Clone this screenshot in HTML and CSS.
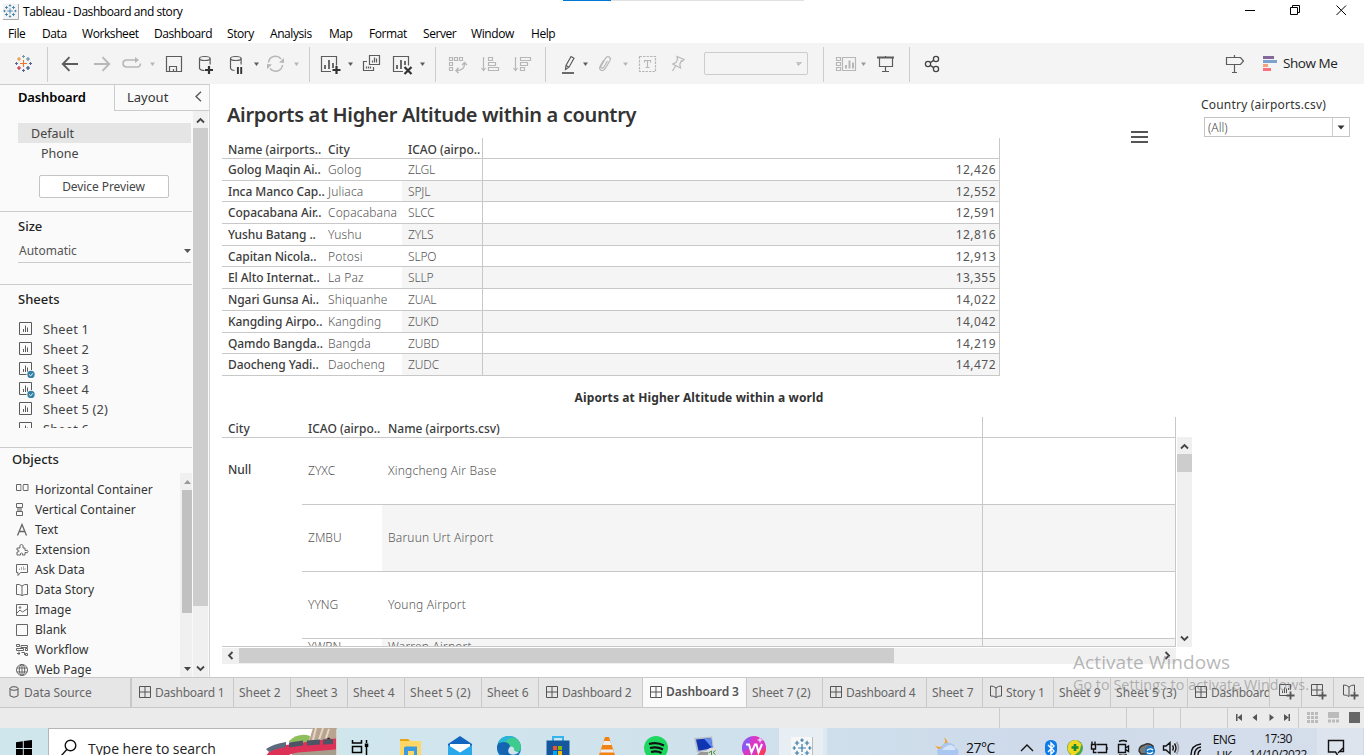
FILE: index.html
```html
<!DOCTYPE html>
<html lang="en">
<head>
<meta charset="utf-8">
<title>Tableau - Dashboard and story</title>
<link rel="stylesheet" href="styles.css">
</head>
<body>
<svg class="defs" width="0" height="0">
  <symbol id="mark" viewBox="0 0 18 18"><path d="M9 5.5v7M5.500 9h7" class="m1"/><path d="M4.500 2.500v4M2.500 4.500h4" class="m2"/><path d="M13.500 2.500v4M11.500 4.500h4" class="m3"/><path d="M4.500 11.500v4M2.500 13.500h4" class="m4"/><path d="M13.500 11.500v4M11.500 13.500h4" class="m5"/><path d="M9 .5v3M7.500 2h3" class="m6"/><path d="M9 14.500v3M7.500 16h3M.5 9h3M2 7.500v3M14.500 9h3M16 7.500v3" class="m7"/></symbol>
  <symbol id="sheet" viewBox="0 0 17 17"><path d="M1.500 1.500h12v12h-12zM5.500 11V8M7.500 11V4.500M9.500 11V6.500" fill="none" stroke="#5a5a5a"/></symbol>
  <symbol id="sheetused" viewBox="0 0 17 17"><path d="M1.500 1.500h12v12h-12zM5.500 11V8M7.500 11V4.500M9.500 11V6.500" fill="none" stroke="#5a5a5a"/><circle cx="13" cy="13.500" r="4.500" fill="#fafafa"/><circle cx="13" cy="13.500" r="3.700" fill="#357fa5"/><path d="M11.200 13.500l1.400 1.400 2.300-2.600" fill="none" stroke="#fff"/></symbol>
  <symbol id="grid" viewBox="0 0 12 12"><path d="M.5.5h11v11H.5zM6 .5v11M.5 6h11" fill="none" stroke="#555"/></symbol>
  <symbol id="book" viewBox="0 0 12 13"><path d="M6 3Q3.500.8.5 1v10q3-.3 5.500 1.500Q8.500 10.700 11.500 11V1Q8.500.8 6 3v9.500" fill="none" stroke="#555"/></symbol>
</svg>

<header class="titlebar">
  <svg class="app" width="17" height="17" viewBox="0 0 17 17"><path d="M1 .5h16v16H1" fill="#f3f3f3"/><path d="M16.500 1v15.500H1" fill="none" stroke="#aaa"/><use href="#mark" class="blue" x="1" y="1" width="14" height="14"/></svg>
  <span class="apptitle">Tableau - Dashboard and story</span>
  <svg class="controls" width="124" height="24" viewBox="1240 0 124 24" fill="none" stroke="#000"><path d="M1245 10.500h10M1290.500 7.500h7v7h-7zM1292.500 7.500v-2h7v7h-2"/><path d="M1336.500 5.500l9.500 9.500m0-9.500l-9.500 9.500"/></svg>
</header>
<nav class="menu"><span class="m-file">File</span><span class="m-data">Data</span><span class="m-ws">Worksheet</span><span class="m-db">Dashboard</span><span class="m-story">Story</span><span class="m-an">Analysis</span><span class="m-map">Map</span><span class="m-fmt">Format</span><span class="m-srv">Server</span><span class="m-win">Window</span><span>Help</span></nav>

<div class="toolbar">
  <svg width="47" height="41" viewBox="0 43 47 41"><use href="#mark" class="color" x="14.500" y="54.500" width="18" height="18"/></svg>
  <i class="sep"></i>
  <svg width="39" height="41" viewBox="48 43 39 41" class="dk"><path d="M78 64H63M69.500 57.200L62.800 64l6.700 6.800" stroke-width="1.900"/></svg>
  <svg width="30" height="41" viewBox="87 43 30 41" class="lt"><path d="M94 64h15M102.500 57.200l6.700 6.800-6.700 6.800" stroke-width="1.900"/></svg>
  <svg width="41" height="41" viewBox="117 43 41 41" class="lt"><path d="M136 60H126q-3 .5-3 3.500t3 3.500h12q2.500-.5 2.500-3.500" stroke-width="1.500"/><path d="M135 57l4 3-4 3z" class="fl"/><path d="M150 62.500h5l-2.500 3.500z" class="fl"/></svg>
  <svg width="32" height="41" viewBox="158 43 32 41" class="dk"><path d="M166.500 56.500h15v15h-15zM169.500 71.500v-5h7v5M173.500 71.500v-2.500"/></svg>
  <svg width="32" height="41" viewBox="190 43 32 41" class="dk"><ellipse cx="204.800" cy="58.500" rx="5.300" ry="2"/><path d="M199.500 58.500v10q1 2 5 2M210.100 58.500v6"/><path d="M209 66v8M205 70h8" stroke="#333" stroke-width="2.200"/></svg>
  <svg width="39" height="41" viewBox="222 43 39 41" class="dk"><ellipse cx="235.800" cy="58.500" rx="5.300" ry="2"/><path d="M230.500 58.500v10q1 2 4 2M241.100 58.500v6"/><path d="M237.900 67v7M241.200 67v7" stroke="#333" stroke-width="1.900"/><path d="M254 62.500h5l-2.500 3.500z" class="fd"/></svg>
  <svg width="48" height="41" viewBox="261 43 48 41" class="lt"><path d="M268.500 62.500a7 7 0 0 1 12.500-3.500M282.500 65a7 7 0 0 1-12.500 3.500" stroke-width="1.500"/><path d="M284 58v5l-5-.5zM267 69v-5l5 .5z" class="fl"/><path d="M294 62.500h5l-2.500 3.500z" class="fl"/></svg>
  <i class="sep"></i>
  <svg width="46" height="41" viewBox="310 43 46 41" class="dk"><path d="M331 71.500h-9.500v-15h15v9"/><path d="M325 69v-4M329 69v-9M333 68v-5" stroke-width="1.800"/><path d="M336.500 66v8M332.500 70h8" stroke="#333" stroke-width="2.200"/><path d="M348 62.500h5l-2.500 3.500z" class="fd"/></svg>
  <svg width="31" height="41" viewBox="356 43 31 41" class="dk"><path d="M369.500 55.500h10v9h-10zM372.500 62.500v-2M374.500 62.500v-5M376.500 62.500v-4M367 61.500h-3.500v9h10V67M366.500 68.500v-2M368.500 68.500v-2M370.500 68.500v-2"/></svg>
  <svg width="48" height="41" viewBox="387 43 48 41" class="dk"><path d="M403 71.500h-9.500v-15h15v9"/><path d="M397 69v-4M401 69v-9M405 65v-4" stroke-width="1.800"/><path d="M404.500 67l7 7m0-7l-7 7" stroke="#333" stroke-width="2.200"/><path d="M420 62.500h5l-2.500 3.500z" class="fd"/></svg>
  <i class="sep"></i>
  <svg width="43" height="41" viewBox="436 43 43 41" class="lt"><path d="M449.500 57.500h3v3h-3zM454.500 57.500h3v3h-3zM459.500 57.500h3v3h-3zM449.500 62.500h3v3h-3zM449.500 67.500h3v3h-3z"/><path d="M464.500 63v1q0 6.500-8 6.500M462 65l2.500-2.500 2.500 2.500M458.500 67.800l-2.500 2.700 2.500 2.700" stroke-width="1.400"/></svg>
  <svg width="23" height="41" viewBox="479 43 23 41" class="lt"><path d="M483.500 57v14M481.500 68l2 2.500 2-2.500M488.500 57.500h4v3h-4zM488.500 62.500h7v3h-7zM488.500 67.500h10v3h-10z" stroke-width="1.200"/></svg>
  <svg width="43" height="41" viewBox="502 43 43 41" class="lt"><path d="M515.500 57v14M513.500 68l2 2.500 2-2.500M520.500 57.500h10v3h-10zM520.500 62.500h7v3h-7zM520.500 67.500h4v3h-4z" stroke-width="1.200"/></svg>
  <i class="sep"></i>
  <svg width="44" height="41" viewBox="546 43 44 41" class="dk"><path d="M562 73h12" stroke-width="1.800"/><path d="M565.500 69.500l.5-4 5-9 3 1.700-5 9zM566 65.500l3 1.700"/><path d="M583 62.500h5l-2.500 3.500z" class="fd"/></svg>
  <svg width="40" height="41" viewBox="590 43 40 41" class="lt"><path d="M607.500 61l-3.700 6.200q-1 1.500-2.200.8-1.200-1-.4-2.400l4.600-7.700q1.400-2 3.300-1 2 1.300 1 3.300l-5 8.500q-1.700 2.600-4.200 1.500-2-1.500-.8-4l3.500-6"/><path d="M623 62.500h5l-2.500 3.500z" class="fl"/></svg>
  <svg width="35" height="41" viewBox="630 43 35 41" class="lt"><path d="M639.500 56.500h16v15h-16z" stroke-dasharray="2.500 1"/><path d="M644.500 62.500v-2h6v2M647.500 60.500v7M645.500 67.500h4"/></svg>
  <svg width="39" height="41" viewBox="665 43 39 41" class="lt"><path d="M677 56.500l7 3-1.500 1.500-1-.2-1.700 3.400.7 3.800-7.800-4 3.200-1.500 1.700-3.300zM675.500 66l-3 5"/></svg>
  <div class="combo"></div>
  <i class="sep"></i>
  <svg width="43" height="41" viewBox="824 43 43 41" class="lt"><path d="M836.500 57.500h4v3h-4zM836.500 62.500h4v3h-4zM836.500 67.500h4v3h-4zM842.500 57.500h13v13h-13z"/><path d="M846 68.500v-3.500M849.500 68.500v-8M853 68.500v-6" stroke-width="2"/><path d="M861 62.500h5l-2.500 3.500z" fill="#999" stroke="none"/></svg>
  <svg width="42" height="41" viewBox="867 43 42 41" class="dk"><path d="M877 57.500h17" stroke-width="2"/><path d="M885.500 56v2M879.500 58v8.500h13V58M885.500 67v5M882 71.500h7"/></svg>
  <i class="sep"></i>
  <svg width="45" height="41" viewBox="910 43 45 41" fill="none" stroke="#444" stroke-width="1.300"><circle cx="928" cy="64" r="2.600"/><circle cx="936" cy="59" r="2.600"/><circle cx="936" cy="69" r="2.600"/><path d="M930.200 62.600l3.500-2.200M930.200 65.400l3.500 2.200"/></svg>
  <svg class="push dk" width="30" height="41" viewBox="1220 43 30 41"><path d="M1226.500 57.500h14l3 3.500-3 3.500h-14zM1234.500 55v2.500M1234.500 64.500v8M1232 72.500h5"/></svg>
  <div class="showme"><svg width="14" height="15"><path d="M0 0h11v3H0z" fill="#85689a"/><path d="M0 4h14v3H0z" fill="#7ea2ce"/><path d="M0 8h5v3H0z" fill="#f4a27b"/><path d="M0 12h8v3H0z" fill="#f9707f"/></svg><span>Show Me</span></div>
</div>

<main class="work">
  <aside class="side">
    <div class="sidetabs"><b>Dashboard</b><div><span>Layout</span><svg width="7" height="11"><path d="M6 .7L1 5.500 6 10.300" fill="none" stroke="#555" stroke-width="1.300"/></svg></div></div>
    <div class="sidebody">
      <div class="panes">
        <section class="devices">
          <div class="dev sel">Default</div>
          <div class="dev phone">Phone</div>
          <div class="preview">Device Preview</div>
        </section>
        <section class="size"><h3>Size</h3><div class="select"><span>Automatic</span><svg width="7" height="4"><path d="M0 0h7L3.500 4z" fill="#555"/></svg></div></section>
        <section class="sheets"><h3>Sheets</h3>
          <div class="sheetlist">
            <div><svg><use href="#sheet"/></svg>Sheet 1</div>
            <div><svg><use href="#sheet"/></svg>Sheet 2</div>
            <div><svg><use href="#sheetused"/></svg>Sheet 3</div>
            <div><svg><use href="#sheetused"/></svg>Sheet 4</div>
            <div><svg><use href="#sheet"/></svg>Sheet 5 (2)</div>
            <div><svg><use href="#sheet"/></svg>Sheet 6</div>
          </div>
        </section>
        <section class="objects">
          <div class="objmain"><h3>Objects</h3>
            <div class="objlist">
              <div><svg class="ic"><path d="M.5 1.500h4.500v6H.5zM7.500 1.500H12v6H7.500z"/><path d="M5 2h2.500v5H5z" fill="#ccc" stroke="none"/></svg>Horizontal Container</div>
              <div><svg class="ic"><path d="M.5.5h6v4h-6zM.5 8.500h6v4h-6z"/><path d="M1 5h5v3H1z" fill="#aaa" stroke="none"/></svg>Vertical Container</div>
              <div><svg class="ic"><path d="M1.500 12.500L6 1.500l4.500 11M3 8.500h6" stroke-width="1.300"/></svg>Text</div>
              <div><svg class="ic"><path d="M1 5h3Q3 1.500 5.500 1.500T7 5h2v2.500q3-1 3 1t-3 1V12H6.500q.5-2-1-2T4.500 12H1V9q2 .3 2-1T1 7z"/></svg>Extension</div>
              <div><svg class="ic"><path d="M.5 1.500h11v8h-7l-2.500 3v-3H.5z"/><path d="M3.500 7V5.500M5.500 7V4M7.500 7V3.500M9 7V5" stroke="#aaa"/></svg>Ask Data</div>
              <div><svg class="ic"><path d="M6 3Q3.500.8.5 1.500v10q3-.3 5.500 1Q8.500 11.200 11.500 11.500v-10Q8.500.8 6 3v9.500"/></svg>Data Story</div>
              <div><svg class="ic"><path d="M.5 1.500h11v11H.5zM1 10l3-3 2.500 2L11 6"/><circle cx="4" cy="4.500" r=".8"/></svg>Image</div>
              <div><svg class="ic"><path d="M.5 1.500h11v11H.5z"/></svg>Blank</div>
              <div><svg class="ic"><path d="M.5 1.500h3v2h-3zM5 2.500h6.500v2H5zM.5 5.500h7v2h-7zM9.500 5.500h2v2h-2zM3 8.500V12M5.500 9.500h3v2.500M1 10.500h3M9.500 10.500h2v2h-2z"/></svg>Workflow</div>
              <div><svg class="ic"><circle cx="6" cy="7" r="5.500"/><ellipse cx="6" cy="7" rx="2.700" ry="5.500"/><path d="M1 5h10M1 9h10M6 1.500v11"/></svg>Web Page</div>
            </div>
          </div>
          <div class="vbar objbar"><svg width="7" height="4"><path d="M0 4h7L3.500 0z" fill="#999"/></svg><i></i><svg width="7" height="4"><path d="M0 0h7L3.500 4z" fill="#444"/></svg></div>
        </section>
      </div>
      <div class="vbar sidebar"><svg width="9" height="7"><path d="M1 5.500L4.500 2 8 5.500" class="chev"/></svg><i></i><svg width="9" height="7"><path d="M1 1.500L4.500 5 8 1.500" class="chev"/></svg></div>
    </div>
  </aside>

  <section class="canvas">
    <h1>Airports at Higher Altitude within a country</h1>
    <div class="t1">
      <div class="head"><b>Name (airports..</b><span>City</span><span>ICAO (airpo..</span><em></em></div>
      <div><b>Golog Maqin Ai..</b><span>Golog</span><span>ZLGL</span><em>12,426</em></div>
      <div><b>Inca Manco Cap..</b><span>Juliaca</span><span>SPJL</span><em>12,552</em></div>
      <div><b>Copacabana Air..</b><span>Copacabana</span><span>SLCC</span><em>12,591</em></div>
      <div><b>Yushu Batang ..</b><span>Yushu</span><span>ZYLS</span><em>12,816</em></div>
      <div><b>Capitan Nicola..</b><span>Potosi</span><span>SLPO</span><em>12,913</em></div>
      <div><b>El Alto Internat..</b><span>La Paz</span><span>SLLP</span><em>13,355</em></div>
      <div><b>Ngari Gunsa Ai..</b><span>Shiquanhe</span><span>ZUAL</span><em>14,022</em></div>
      <div><b>Kangding Airpo..</b><span>Kangding</span><span>ZUKD</span><em>14,042</em></div>
      <div><b>Qamdo Bangda..</b><span>Bangda</span><span>ZUBD</span><em>14,219</em></div>
      <div><b>Daocheng Yadi..</b><span>Daocheng</span><span>ZUDC</span><em>14,472</em></div>
    </div>
    <h2>Aiports at Higher Altitude within a world</h2>
    <div class="world">
      <div class="t2">
        <div class="head"><span>City</span><span>ICAO (airpo..</span><span class="nm">Name (airports.csv)</span><em></em></div>
        <div class="t2body">
          <span class="null">Null</span>
          <div class="rows">
            <div><span>ZYXC</span><span class="nm">Xingcheng Air Base</span><em></em></div>
            <div><span>ZMBU</span><span class="nm">Baruun Urt Airport</span><em></em></div>
            <div><span>YYNG</span><span class="nm">Young Airport</span><em></em></div>
            <div class="cut"><span>YWRN</span><span class="nm">Warren Airport</span><em></em></div>
          </div>
        </div>
      </div>
      <div class="vbar worldbar"><svg width="9" height="7"><path d="M1 5.500L4.500 2 8 5.500" class="chev"/></svg><i></i><svg width="9" height="7"><path d="M1 1.500L4.500 5 8 1.500" class="chev"/></svg></div>
    </div>
    <div class="hbar"><svg width="7" height="9"><path d="M5.500 1L2 4.500 5.500 8" class="chev"/></svg><i></i><svg width="7" height="9"><path d="M1.500 1L5 4.500 1.500 8" class="chev"/></svg></div>
  </section>

  <div class="burger"><i></i><i></i><i></i></div>
  <div class="filter"><label>Country (airports.csv)</label><div class="drop"><span>(All)</span><svg width="17" height="18"><path d="M.5 0v18" stroke="#ccc"/><path d="M5.500 7.500h7L9 11.500z" fill="#333"/></svg></div></div>
</main>

<div class="tabs">
  <div class="tab src"><svg width="10" height="12" fill="none" stroke="#555"><ellipse cx="5" cy="2.500" rx="4" ry="1.800"/><path d="M1 2.500v7.300q4 3 8 0V2.500"/></svg>Data Source</div>
  <div class="tab d1"><svg width="12" height="12"><use href="#grid"/></svg>Dashboard 1</div>
  <div class="tab w57">Sheet 2</div><div class="tab w57">Sheet 3</div><div class="tab w57">Sheet 4</div>
  <div class="tab w77">Sheet 5 (2)</div><div class="tab w57">Sheet 6</div>
  <div class="tab w104"><svg width="12" height="12"><use href="#grid"/></svg>Dashboard 2</div>
  <div class="tab w104 on"><svg width="12" height="12"><use href="#grid"/></svg>Dashboard 3</div>
  <div class="tab w76">Sheet 7 (2)</div>
  <div class="tab w104"><svg width="12" height="12"><use href="#grid"/></svg>Dashboard 4</div>
  <div class="tab w56">Sheet 7</div>
  <div class="tab w71"><svg width="12" height="13"><use href="#book"/></svg>Story 1</div>
  <div class="tab w57">Sheet 9</div><div class="tab w77">Sheet 5 (3)</div>
  <div class="tab w82"><svg width="12" height="12"><use href="#grid"/></svg>Dashboard 5</div>
  <div class="tab add"><svg width="17" height="16"><path d="M9 11.500H.5V.5h11V6M3.500 9V6.500M5.500 9V3.500M7.500 9V4.500M9.500 6V4" fill="none" stroke="#555"/><path d="M11.500 7.500v8M7.500 11.500h8" stroke="#555" stroke-width="1.800"/></svg></div>
  <div class="tab add"><svg width="17" height="16"><path d="M8 11.500H.5V.5h11V7M6 .5v11M.5 6h11" fill="none" stroke="#555"/><path d="M11.500 7.500v8M7.500 11.500h8" stroke="#555" stroke-width="1.800"/></svg></div>
  <div class="tab add"><svg width="17" height="16"><path d="M7 11.500l-1 1Q3.500 10.700.5 11V1q3-.2 5.500 2Q8.500.8 11.500 1v6M6 3v9" fill="none" stroke="#555"/><path d="M11.500 7.500v8M7.500 11.500h8" stroke="#555" stroke-width="1.800"/></svg></div>
</div>
<div class="status">
  <i class="s1"></i><i class="s2"></i><i class="s3"></i><i class="s3"></i><i class="s4"></i>
  <svg width="71" height="20" viewBox="1228 708 71 20" fill="#555"><path d="M1236 714h1.500v7h-1.500zM1242 714v7l-4.500-3.500zM1257 714v7l-4.500-3.500zM1269.500 714v7l4.500-3.500zM1284 714v7l4.500-3.500zM1288.500 714h1.500v7h-1.500z"/><path d="M1298.500 708v20" stroke="#ccc"/></svg>
  <svg width="65" height="20" viewBox="1299 708 65 20"><path d="M1307 712h3v3h-3zM1311 712h3v3h-3zM1315 712h3v3h-3zM1307 716h3v3h-3zM1311 716h3v3h-3zM1315 716h3v3h-3zM1307 720h3v3h-3zM1311 720h3v3h-3zM1315 720h3v3h-3zM1328 712h11v6h-11zM1328 719.500h3v3h-3zM1332 719.500h3v3h-3zM1336 719.500h3v3h-3z" fill="#bbb"/><path d="M1349 712h11v11h-11z" fill="#666"/></svg>
</div>

<footer class="taskbar">
  <svg width="48" height="27" viewBox="0 728 48 27"><path d="M16 742.300l6.800-1v6.700H16zM23.800 741.100l8.200-1.100v8h-8.200zM16 749h6.800v6.700L16 755zM23.800 749H32v8h-8.200z"/></svg>
  <div class="search"><svg width="17" height="19" viewBox="60 738 17 19" fill="none" stroke="#111" stroke-width="1.400"><circle cx="70.500" cy="745.500" r="5.300"/><path d="M66.800 749.500L61 756"/></svg><span>Type here to search</span>
    <svg class="train" width="73" height="27" viewBox="264 728 73 27"><path d="M289 741q10-9 21-5l-1 6h-20z" fill="#8fbe5c"/><path d="M309 741l4-13h23.500v27H309z" fill="#b9a492"/><path d="M316 728l-3 12M323 728l-4 12M329 729l-3 9" stroke="#e6d7c5" stroke-width="2"/><path d="M326 743v-3q3-5 5 0v3z" fill="#302722"/><path d="M292 750h44v5h-44z" fill="#a79d8d"/><path d="M264 756q0-15 22-19 24-4.500 50-6.500v11l-38 3q-14 1.500-17 11.500z" fill="#dd3157" transform="translate(0 8)"/><path d="M266 749q7-5 20-7v5q-10 1.500-17 5z" fill="#5d6a7d"/><path d="M289 741.500l14-2v5l-14 2zM307 739.500l13-1v5l-13 1zM323 738.500l10-.5v5l-10 .5z" fill="#4c5465" transform="translate(0 1)"/></svg></div>
  <svg width="443" height="27" viewBox="337 728 443 27">
    <g fill="none" stroke="#000" stroke-width="1.500"><path d="M352.500 740v3h9v-3M352.500 746.500h9v6h-9zM366.500 740v3M366.500 747v8"/></g><path d="M364.800 743.500h3.500v3.500h-3.500z"/>
    <path d="M400 739h8l3 2h10v14h-21z" fill="#ffd766"/><path d="M400 739h8l2 2h-10z" fill="#e8a613"/><path d="M404 755v-7q0-1.500 2-1.500h11v8.500z" fill="#3c9be0"/><path d="M408 751h6v4h-6z" fill="#ffd766"/>
    <path d="M448 744l12-8 12 8v11h-24z" fill="#1266bf"/><path d="M450 744h20v4l-10 6-10-6z" fill="#fff"/><path d="M448 745l12 7.500 12-7.500v12h-24z" fill="#29a9ec"/>
    <circle cx="509" cy="748" r="12" fill="#1679c5"/><path d="M498 743q3-7 11-7 11 1 12 11 0 6-8 6-5 0-4-3 2-5-3-6-4-2-8-1z" fill="#3ecb90"/><path d="M498 743q3-7 11-7 4 0 7 2-7-1-10 3z" fill="#28b4dc"/><path d="M497 748q0-6 7-6 8 1 5 7-1 4 3 6h-6q-8 0-9-7z" fill="#1465b2"/><path d="M509 748q2-3 5 0-1 4 5 4-4 4-9 2-3-2-1-6z" fill="#cfe4ee"/>
    <path d="M553 741v-4h10v4" fill="none" stroke="#34b4ee" stroke-width="2"/><path d="M546.500 740.500h23V755h-23z" fill="#15569d"/><path d="M553 746h4v4h-4z" fill="#f35325"/><path d="M558 746h4v4h-4z" fill="#81bc06"/><path d="M553 751h4v4h-4z" fill="#05a6f0"/><path d="M558 751h4v4h-4z" fill="#ffba08"/>
    <path d="M605 737h4l6 18h-16z" fill="#f38214"/><path d="M603.800 741h6.400l1.300 4h-9zM601 749.500h12l1 3h-14z" fill="#eee"/>
    <circle cx="656" cy="748" r="12" fill="#1ed760"/><path d="M649 744q8-2.500 15 1.500M650 748q7-2 13 1.500M651 752q6-1.500 10.500 1" fill="none" stroke="#111" stroke-width="2.200"/>
    <path d="M694 738l18-1.500 2 13-17 3z" fill="#b7bdc6"/><path d="M696 739.500l15-1.300 1.500 10-14 2.500z" fill="#1035b2"/><path d="M704 738.800l7-.6 1.500 10z" fill="#5e8af1"/><circle cx="712" cy="753" r="5.500" fill="#ddd"/><path d="M708.500 753l3-2v4M715.500 750.500l-2.500 2 2.500 2" fill="none" stroke="#3c9448"/><path d="M700 752l8 0v3h-11z" fill="#999"/>
    <circle cx="754" cy="748" r="12" fill="#d838c5"/><path d="M743 752a12 12 0 0 1 8-15.500l-2 11z" fill="#8a58f4"/><path d="M766 748a12 12 0 0 1-8 11l-2-7z" fill="#fb3a64"/><path d="M746 744.500h3l2.500 8 3.500-8h1.500l2 8 3.500-8.500" fill="none" stroke="#fff" stroke-width="2"/><path d="M760 737.500v5M757.500 740h5" stroke="#fff"/>
  </svg>
  <div class="active"><svg width="24" height="19" viewBox="0 0 24 19"><path d="M1 1h22v18H1z" fill="#f7f7f7"/><path d="M22.500 1v18" stroke="#bbb"/><use href="#mark" class="blue" x="2" y="2" width="20" height="20"/></svg></div>
  <div class="tray">
    <svg width="34" height="27" viewBox="930 728 34 27"><path d="M944 737q3 6-2 9-3 2-7-.5l5 6h9l-1-8q-1-4-4-6.500z" fill="#f5a02c"/><path d="M938 755q-3-6 3-7 2-6 9-5 5 1 5 5 5 1 3 7z" fill="#a9c7f0"/><path d="M942 750q4-5 9-5 5 2 4 5z" fill="#d5e4f9"/></svg>
    <span class="temp">27°C</span>
    <svg width="208" height="27" viewBox="1001 728 208 27" fill="none" stroke="#111" stroke-width="1.400"><path d="M1021 751l6-6 6 6"/>
      <rect x="1045" y="740" width="12" height="16" rx="5.500" fill="#0a7be8" stroke="none"/><path d="M1048 745l6 6-3 3v-11l3 3-6 6" stroke="#fff"/>
      <circle cx="1075" cy="748" r="8" fill="#44a94a" stroke="none"/><path d="M1067.500 749q0-9 9-9l5 4-2 7-6 5q-5-2-6-7z" fill="#f2d61f" stroke="none"/><path d="M1075 744v7M1071.500 747.500h7" stroke="#158a31" stroke-width="2.600"/>
      <path d="M1096.500 744.500h10v8h-9M1107 747v3M1091.500 744.500v4.500h4v-4.500zM1092 741.500v3M1095 741.500v3M1093.500 749v3.500h3" />
      <path d="M1118.500 744.500h7v8h-7zM1125.500 748l3-2v5.500l-3-2M1119 741.500q4-2 8 0M1119 755q4 1 8 0"/>
      <path d="M1139 751q0-5 5-6 5-3 9 1l1 6-6 2h-7z" fill="#777" stroke="#333"/><circle cx="1150" cy="751" r="5" fill="#1878ca" stroke="none"/><path d="M1147 750.500q3-3 6-.5M1153 752q-3 3-6 .5" stroke="#fff"/>
      <path d="M1163.500 746h2.500l4-3.500v11l-4-3.500h-2.500zM1172.500 745.500q1.700 2.500 0 5M1174.500 743.500q3 4.500 0 9"/><path d="M1176.500 742q4 6 0 12" stroke="#999"/>
      <path d="M1191 755q0-10 10-11M1194.500 755q0-7 6.500-8M1198 755q0-4 3-5" /></svg>
    <div class="lang">ENG<br>UK</div>
    <div class="clock">17:30<br>14/10/2022</div>
    <svg class="note" width="50" height="27" viewBox="1314 728 50 27" fill="none" stroke="#111" stroke-width="1.400"><path d="M1337 751.500h3.500v-11h-15v11.500h7l2 3M1335 753l5-5"/><path d="M1361.500 728v27" stroke="#a9b6c4"/></svg>
  </div>
</footer>

<div class="watermark"><strong>Activate Windows</strong><span>Go to Settings to activate Windows.</span></div>
</body>
</html>
```
FILE: styles.css
```css
* { box-sizing: border-box; }
html, body { margin: 0; height: 755px; overflow: hidden; }
body { width: 1364px; display: flex; flex-direction: column; position: relative; background: #fff; font: 12px/20px "Noto Sans", "Open Sans", sans-serif; color: #333; white-space: nowrap; }
svg { display: block; flex: none; }
.defs { position: absolute; }
h1, h2, h3 { margin: 0; }
b, em, i, strong { font-style: normal; }

#mark path { fill: none; stroke-width: 1.1; }
.m1 { stroke: var(--m1, #3a7ca8); } .m2 { stroke: var(--m2, #3a7ca8); } .m3 { stroke: var(--m3, #3a7ca8); }
.m4 { stroke: var(--m4, #3a7ca8); } .m5 { stroke: var(--m5, #3a7ca8); } .m6 { stroke: var(--m6, #3a7ca8); } .m7 { stroke: var(--m7, #3a7ca8); }
.color { --m1: #e8762c; --m2: #eb9129; --m3: #5b879b; --m4: #c72037; --m5: #1f457e; --m6: #7099a6; --m7: #5c6692; }

.titlebar { height: 24px; flex: none; display: flex; align-items: flex-start; padding-left: 2px; background: linear-gradient(#0078d7, #0078d7) 563px 0 / 48px 1px no-repeat, linear-gradient(#e1e1e1, #e1e1e1) 611px 0 / 193px 1px no-repeat, #fff; color: #000; font-family: "Open Sans", sans-serif; }
.app { margin-top: 3px; }
.apptitle { margin: 2px 0 0 4px; letter-spacing: -.44px; }
.controls { margin-left: auto; }

.menu { height: 19px; flex: none; display: flex; padding-left: 8px; color: #000; font: 12px/20px "Open Sans", sans-serif; letter-spacing: -.42px; }
.m-file { width: 34px; } .m-data { width: 40px; } .m-ws { width: 72px; } .m-db { width: 73px; } .m-story { width: 43px; } .m-an { width: 59px; } .m-map { width: 40px; } .m-fmt { width: 54px; } .m-srv { width: 48px; } .m-win { width: 60px; }

.toolbar { height: 41px; flex: none; display: flex; background: #f4f4f4; }
.sep { width: 1px; flex: none; margin: 4px 0 2px; background: #ccc; }
.dk { fill: none; stroke: #5c5c5c; stroke-width: 1.2; }
.lt { fill: none; stroke: #b7b7b7; stroke-width: 1.2; }
.fl { fill: #b7b7b7; stroke: none; }
.fd { fill: #5c5c5c; stroke: none; }
.combo { width: 104px; height: 23px; margin: 9px 15px 0 0; border: 1px solid #ccc; border-radius: 2px; background: linear-gradient(to bottom right, #c4c4c4 50%, transparent 0) 94px 9px / 4px 4px no-repeat, linear-gradient(to bottom left, #c4c4c4 50%, transparent 0) 90px 9px / 4px 4px no-repeat; }
.push { margin-left: auto; }
.showme { width: 114px; display: flex; align-items: flex-start; padding: 13px 0 0 13px; font: 13.500px/20px "Open Sans", sans-serif; letter-spacing: -.45px; color: #222; gap: 6px; }
.showme span { margin-top: -3px; }

.work { height: 593px; flex: none; display: flex; }
.side { width: 210px; height: 593px; background: #fafafa; border-top: 1px solid #ccc; border-right: 1px solid #d4d4d4; flex: none; display: flex; flex-direction: column; overflow: hidden; }
.sidetabs { height: 26px; flex: none; display: flex; font-size: 13px; line-height: 25px; }
.sidetabs b { width: 114px; padding-left: 18px; font-weight: 600; color: #000; letter-spacing: -.15px; }
.sidetabs div { flex: 1; display: flex; justify-content: space-between; border-left: 1px solid #ccc; border-bottom: 1px solid #ccc; padding: 0 7px 0 12px; }
.sidetabs svg { margin-top: 6px; }
.sidebody { display: flex; flex: 1; min-height: 0; }
.panes { width: 192px; flex: none; display: flex; flex-direction: column; }
.panes section { border-bottom: 1px solid #ccc; flex: none; }
h3 { font-size: 13px; font-weight: 500; color: #222; line-height: 20px; padding-left: 18px; }
.devices { height: 101px; padding: 12px 1px 0 18px; }
.dev { height: 20px; line-height: 21px; padding-left: 13px; font-size: 12.500px; color: #444; }
.sel { background: #e5e5e5; }
.phone { padding-left: 23px; }
.preview { width: 130px; height: 23px; margin: 12px 0 0 21px; border: 1px solid #c4c4c4; border-radius: 2px; background: #fff; text-align: center; line-height: 21px; color: #444; letter-spacing: -.08px; padding-right: 1px; }
.size { height: 73px; padding-top: 4px; }
.select { height: 22px; margin: 5px 1px 0 18px; padding: 0 0 0 1px; border-bottom: 1px solid #ccc; display: flex; justify-content: space-between; line-height: 20px; color: #555; }
.select svg { margin-top: 8px; }
.sheets { height: 163px; padding-top: 4px; }
.sheetlist { height: 109px; margin: 10px 0 0 18px; overflow: hidden; font-size: 12.800px; color: #444; letter-spacing: .2px; }
.sheetlist div { height: 20px; display: flex; }
.sheetlist svg { width: 17px; height: 17px; margin: 2px 8px 0 0; }
.panes .objects { flex: 1; min-height: 0; border: 0; display: flex; justify-content: space-between; }
.objmain { padding-top: 1px; }
.objmain h3 { padding-left: 12px; }
.objlist { padding: 11px 0 0 16px; height: 208px; overflow: hidden; letter-spacing: .02px; }
.objlist div { height: 20px; display: flex; }
.ic { width: 13px; height: 14px; margin: 3px 6px 0 0; fill: none; stroke: #666; }
.vbar { display: flex; flex-direction: column; align-items: center; justify-content: space-between; background: #f0f0f0; flex: none; }
.vbar i { display: block; }
.chev { fill: none; stroke: #444; stroke-width: 1.800; }
.objbar { width: 12px; margin-top: 25px; padding: 7px 0 6px 2px; }
.objbar i { width: 10px; height: 123px; background: #c1c1c1; margin: 6px 0 auto; }
.sidebar { width: 15px; margin-left: 1px; padding: 6px 0 5px; }
.sidebar i { width: 15px; height: 478px; background: #cdcdcd; margin: 4px 0 auto; }

.canvas { width: 971px; margin-left: 12px; flex: none; }
h1 { font: 600 20px/28px "Noto Sans", sans-serif; letter-spacing: -.33px; color: #333; padding: 17px 0 0 5px; height: 54px; }
.t1 { width: 778px; }
.t1 > div { height: 21.700px; display: grid; grid-template: 100% / 100px 80px 80px 1fr; border-bottom: 1px solid #c8c8c8; line-height: 22px; }
.t1 > .head { height: 21px; line-height: 23px; }
.t1 > div > * { padding-left: 6px; }
.t1 b { font-weight: 500; letter-spacing: -.08px; color: #3c3c3c; }
.t1 span { color: #555; font-weight: 300; letter-spacing: .15px; }
.t1 span:nth-child(3) { letter-spacing: -.15px; }
.t1 em { text-align: right; padding-right: 3px; border: solid #c8c8c8; border-width: 0 1px; letter-spacing: .47px; color: #555; }
.t1 .head b, .t1 .head span, .t1 .head span:nth-child(3), .head > span { color: #3c3c3c; font-weight: 500; letter-spacing: 0; }
.t1 > div:nth-child(odd):not(.head) span:nth-child(3), .t1 > div:nth-child(odd):not(.head) em { background: #f5f5f5; }
h2 { font: bold 12px/20px "Noto Sans", sans-serif; letter-spacing: .13px; text-align: center; width: 954px; height: 41px; padding-top: 12px; color: #333; }
.world { display: flex; height: 230px; }
.t2 { width: 954px; }
.t2 .head { display: grid; grid-template: 100% / 80px 80px 600px 1fr; height: 21px; line-height: 23px; border-bottom: 1px solid #c8c8c8; }
.t2 span { padding-left: 6px; }
.t2 em { border: solid #c8c8c8; border-width: 0 1px; }
.t2body { display: flex; height: 209px; overflow: hidden; border-bottom: 1px solid #c8c8c8; }
.null { width: 80px; flex: none; line-height: 64px; color: #3c3c3c; font-weight: 500; }
.rows { flex: 1; }
.rows > div { display: grid; grid-template: 100% / 80px 600px 1fr; height: 67px; line-height: 66px; border-bottom: 1px solid #c8c8c8; }
.rows span { color: #555; font-weight: 300; }
.rows .nm { letter-spacing: .2px; }
.rows > div:nth-child(even) .nm, .rows > div:nth-child(even) em { background: #f5f5f5; }
.rows .cut { line-height: 16px; }
.worldbar { width: 15px; margin: 20px 0 0 1px; padding: 6px 0 5px; }
.worldbar i { width: 15px; height: 18px; background: #cdcdcd; margin: 4px 0 auto; }
.hbar { width: 954px; height: 16px; margin-top: 1px; background: #f0f0f0; display: flex; align-items: center; padding: 0 5px; }
.hbar i { width: 655px; height: 15px; margin: 0 auto 0 5px; background: #cdcdcd; }

.burger { width: 17px; margin: 47px 0 0 -62px; display: flex; flex-direction: column; gap: 3px; flex: none; }
.burger i { height: 2px; background: #555; }
.filter { margin: 11px 0 0 53px; letter-spacing: .2px; }
.filter label { display: block; color: #333; }
.drop { width: 146px; height: 20px; margin: 2px 0 0 3px; border: 1px solid #c4c4c4; display: flex; justify-content: space-between; line-height: 19px; padding-left: 3px; color: #444; font-size: 12px; font-weight: 300; letter-spacing: 0; }

.tabs { height: 31px; flex: none; display: flex; background: #e6e6e6; border: solid #c8c8c8; border-width: 1px 0; color: #666; }
.tab { flex: none; display: flex; align-items: center; border-right: 1px solid #c8c8c8; padding: 0 0 0 5px; overflow: hidden; letter-spacing: -.05px; }
.tab svg { margin-right: 4px; margin-top: -2px; }
.tab > svg:first-child { margin-left: 2px; }
.src { width: 132px; border-right-width: 2px; padding-left: 7px; }
.src svg { margin-right: 5px; }
.d1 { width: 102px; }
.w56 { width: 56px; } .w57 { width: 57px; } .w71 { width: 71px; } .w76 { width: 76px; } .w77 { width: 77px; letter-spacing: .15px; } .w82 { width: 82px; } .w104 { width: 104px; }
.d1, .w104, .w82 { letter-spacing: -.25px; }
.on { background: #fafafa; font-weight: 600; color: #555; letter-spacing: -.08px; line-height: 18px; padding-bottom: 2px; }
.on svg { margin-top: 0; }
.add { width: 32px; padding-left: 7px; }
.add:last-child { border: 0; }
.status { height: 20px; flex: none; display: flex; background: #ebebeb; }
.status i { border-right: 1px solid #ccc; }
.s1 { width: 1000px; } .s2 { width: 127px; } .s3 { width: 27px; } .s4 { width: 47px; }

.taskbar { height: 27px; flex: none; display: flex; overflow: hidden; background: linear-gradient(90deg, #d0e6ed 0 25%, #cfe1ec 55%, #cedaea 75%, #d6deeb); }
.search { width: 289px; height: 40px; background: #fff; border: solid #b5b5b5; border-width: 1px 0 0 1px; display: flex; color: #222; font: 14px/20px "Open Sans", sans-serif; letter-spacing: -.05px; flex: none; }
.search svg:first-child { margin: 9px 11px 0 11px; }
.search span { margin-top: 10px; }
.search .train { margin: -1px 0 0 auto; }
.active { width: 44px; margin-left: -1px; background: #e7eff5; padding: 8px 0 0 11px; flex: none; }
.tray { flex: 1; display: flex; border-left: 4px solid #dde8f1; padding-left: 103px; color: #111; font-family: "Open Sans", sans-serif; }
.temp { width: 37px; padding: 10px 0 0 2px; font-size: 14px; letter-spacing: -.5px; }
.lang, .clock { font-size: 12px; line-height: 16px; padding-top: 4px; text-align: center; letter-spacing: -.6px; flex: none; }
.lang { width: 30px; }
.clock { width: 78px; padding-top: 3px; }
.note { margin-left: auto; background: #dde4ee; }

.watermark { position: absolute; left: 1073px; top: 648px; font-family: "Open Sans", sans-serif; color: rgba(130, 130, 130, .58); }
.watermark strong { display: block; font-size: 19px; line-height: 28px; font-weight: 400; letter-spacing: .08px; }
.watermark span { font-size: 14.300px; line-height: 18px; display: block; letter-spacing: .05px; }
```
